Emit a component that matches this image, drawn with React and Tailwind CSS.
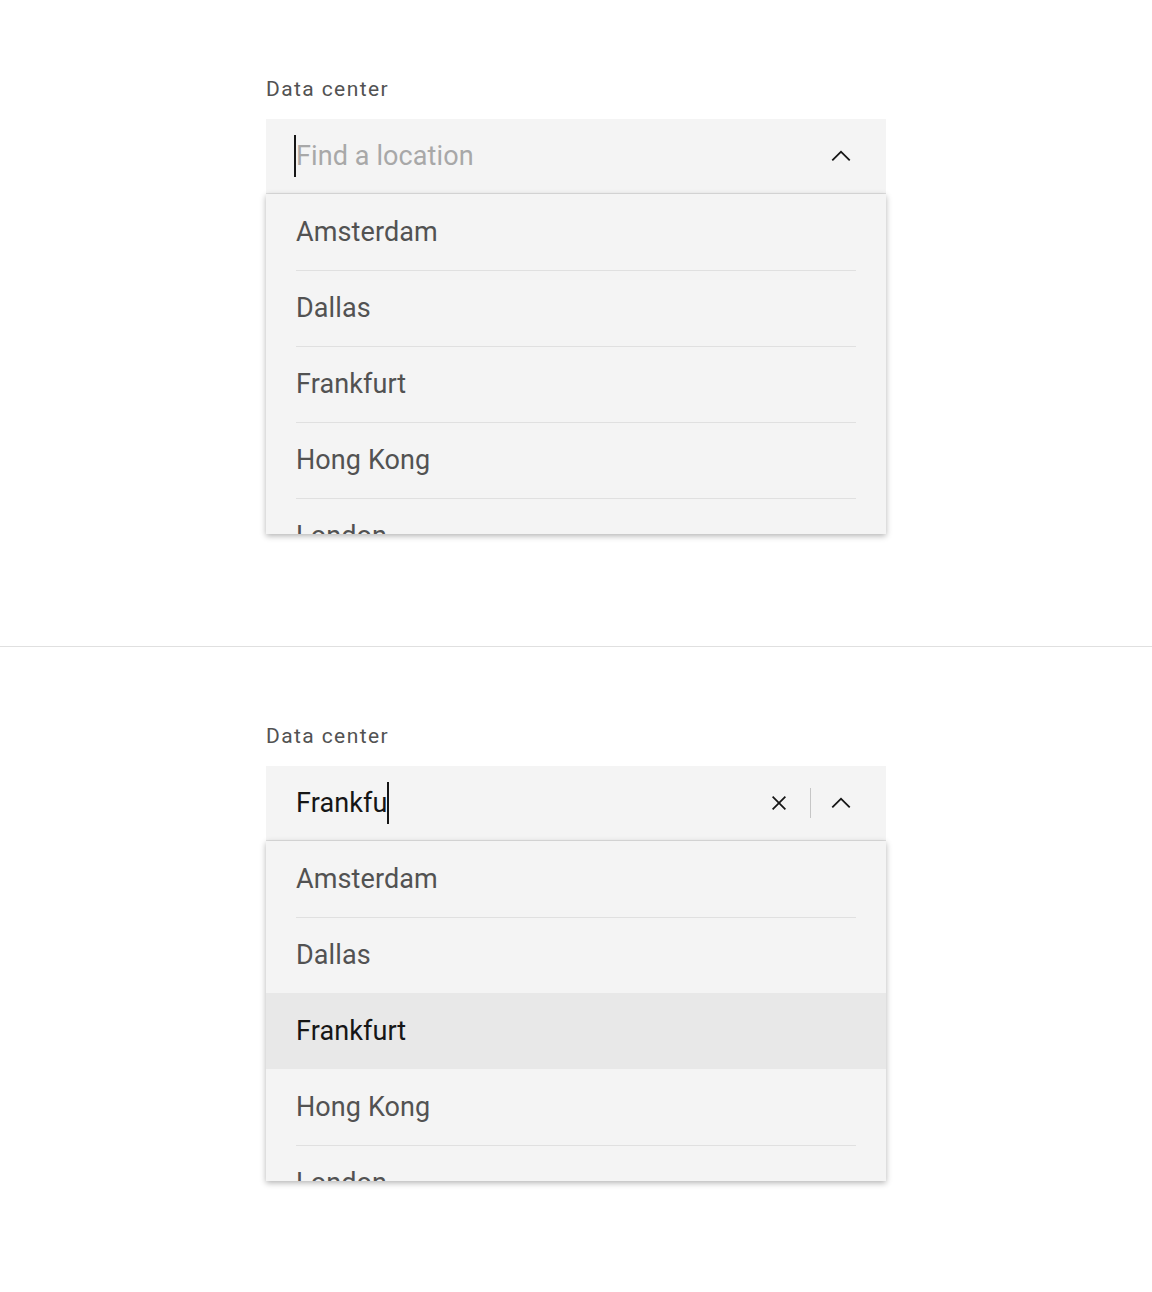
import React from 'react';

const cities = ['Amsterdam', 'Dallas', 'Frankfurt', 'Hong Kong', 'London'];

function ChevronUp() {
  return (
    <svg width="30" height="30" viewBox="0 0 16 16" fill="#161616">
      <path d="M8 5l5 5-.7.7L8 6.4 3.7 10.7 3 10z" />
    </svg>
  );
}

function CloseIcon() {
  return (
    <svg width="28" height="28" viewBox="0 0 16 16" fill="#161616">
      <path d="M12 4.7L11.3 4 8 7.3 4.7 4 4 4.7 7.3 8 4 11.3 4.7 12 8 8.7 11.3 12 12 11.3 8.7 8z" />
    </svg>
  );
}

// Lista desplegable con las ubicaciones
function Menu({ active }) {
  return (
    <div className="h-[340px] overflow-hidden bg-[#f4f4f4] shadow-[0_2px_6px_rgba(0,0,0,0.3)]">
      {cities.map((city, i) => {
        const isActive = city === active;
        const hideBorder = i === 0 || isActive || cities[i - 1] === active;
        return (
          <div key={city} className={`h-[76px] px-[30px] ${isActive ? 'bg-[#e8e8e8]' : ''}`}>
            <div
              className={`h-full flex items-center border-t ${hideBorder ? 'border-transparent' : 'border-[#e0e0e0]'} ${isActive ? 'text-[#161616]' : 'text-[#525252]'} text-[27px] tracking-[0.1px]`}
            >
              {city}
            </div>
          </div>
        );
      })}
    </div>
  );
}

function ComboBox({ value, active }) {
  return (
    <div className="w-[620px] mx-auto pt-[76px]">
      <div className="text-[21px] leading-[26px] tracking-[1.4px] text-[#525252] mb-[17px]">Data center</div>
      <div className="h-[75px] bg-[#f4f4f4] border-b border-[#e0e0e0] flex items-center pl-[30px] pr-[30px]">
        <div className="flex-1 flex items-center text-[27px] tracking-[0.1px]">
          {value ? (
            <>
              <span className="text-[#161616]">{value}</span>
              <span className="w-[2px] h-[42px] bg-[#161616]" />
            </>
          ) : (
            <>
              <span className="w-[2px] h-[42px] bg-[#161616] -ml-[2px]" />
              <span className="text-[#a8a8a8]">Find a location</span>
            </>
          )}
        </div>
        {value && (
          <>
            <CloseIcon />
            <span className="w-px h-[30px] bg-[#c6c6c6] ml-[17px] mr-[15px]" />
          </>
        )}
        <ChevronUp />
      </div>
      <Menu active={active} />
    </div>
  );
}

export default function App() {
  return (
    <div className="bg-white min-h-screen" style={{ fontFamily: 'Roboto, "Liberation Sans", sans-serif' }}>
      <div className="h-[647px] border-b border-[#e0e0e0]">
        <ComboBox />
      </div>
      <div className="h-[645px]">
        <ComboBox value="Frankfu" active="Frankfurt" />
      </div>
    </div>
  );
}
